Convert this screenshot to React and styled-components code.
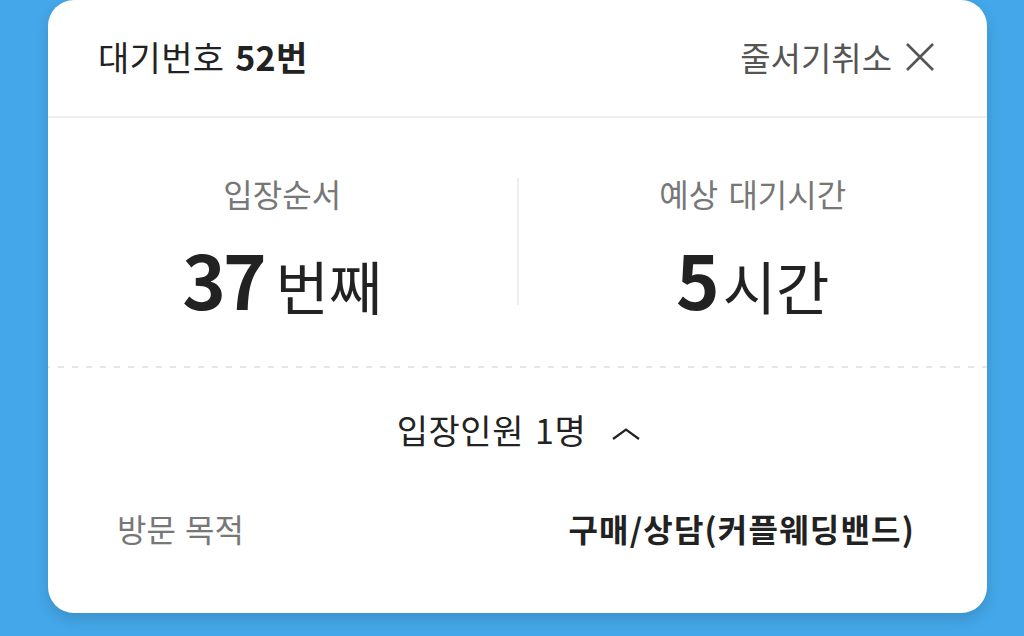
import React from "react";
import styled, { createGlobalStyle } from "styled-components";

const Global = createGlobalStyle`
  html, body { margin: 0; padding: 0; }
  body {
    background: #44a7e9;
    font-family: "Noto Sans CJK KR", "Noto Sans", sans-serif;
    -webkit-font-smoothing: antialiased;
  }
`;

const Page = styled.div`
  width: 1024px;
  height: 636px;
  background: #44a7e9;
  padding: 0 37px 0 48px;
  box-sizing: border-box;
  overflow: hidden;
`;

const Card = styled.div`
  background: #fff;
  border-radius: 26px;
  height: 613px;
  box-shadow: 0 6px 14px rgba(0, 0, 0, 0.14);
  display: flex;
  flex-direction: column;
  overflow: hidden;
`;

const Header = styled.div`
  height: 118px;
  box-sizing: border-box;
  border-bottom: 2px solid #efefef;
  display: flex;
  align-items: center;
  justify-content: space-between;
  padding: 0 52px 0 50px;
`;

const Title = styled.div`
  font-size: 34px;
  line-height: 40px;
  letter-spacing: 0.3px;
  word-spacing: 3px;
  color: #222;
  margin-top: -2px;
`;

const Strong = styled.span`
  font-weight: 700;
`;

const CancelButton = styled.button`
  border: 0;
  background: none;
  padding: 0;
  display: flex;
  align-items: center;
  gap: 13px;
  font-family: inherit;
  font-size: 33px;
  line-height: 40px;
  letter-spacing: 0;
  color: #555;
  margin-top: -2px;
  cursor: pointer;
`;

const Stats = styled.div`
  display: grid;
  grid-template-columns: 1fr 2px 1fr;
  height: 247px;
  box-sizing: border-box;
`;

const Stat = styled.div`
  display: flex;
  flex-direction: column;
  align-items: center;
  padding-top: 56px;
`;

const StatLabel = styled.div`
  font-size: 32px;
  line-height: 38px;
  letter-spacing: 0;
  word-spacing: 3px;
  color: #777;
`;

const StatValue = styled.div`
  margin-top: 26px;
  height: 80px;
  line-height: 80px;
  color: #222;
  white-space: nowrap;
`;

const Num = styled.span`
  font-size: 74px;
  font-weight: 700;
  letter-spacing: -3px;
  margin-right: ${(p) => p.$gap || 10}px;
`;

const Unit = styled.span`
  font-size: 58px;
  letter-spacing: 0;
`;

const VDivider = styled.div`
  margin-top: 60px;
  height: 127px;
  background: #eeeeee;
`;

const Dotted = styled.div`
  margin-top: 1px;
  height: 2px;
  background-image: linear-gradient(to right, #e6e6e6 0 6px, transparent 6px 14px);
  background-size: 14px 2px;
  background-position: 10px 0;
`;

const CountRow = styled.div`
  display: flex;
  justify-content: center;
  align-items: center;
  gap: 26px;
  padding-top: 43px;
  margin-left: 2px;
`;

const CountText = styled.div`
  font-size: 34px;
  line-height: 38px;
  letter-spacing: 0.5px;
  word-spacing: 3px;
  color: #222;
`;

const ChevronBox = styled.span`
  display: flex;
  margin-top: 8px;
`;

const InfoRow = styled.div`
  display: flex;
  justify-content: space-between;
  align-items: center;
  padding: 0 72px 0 69px;
  margin-top: 60px;
`;

const InfoLabel = styled.div`
  font-size: 32px;
  line-height: 38px;
  letter-spacing: 0;
  word-spacing: 2px;
  color: #777;
`;

const InfoValue = styled.div`
  font-size: 32px;
  line-height: 38px;
  letter-spacing: 1.2px;
  font-weight: 700;
  color: #222;
`;

const CloseIcon = () => (
  <svg width="30" height="28" viewBox="0 0 30 28">
    <path d="M2 1 L28 27 M28 1 L2 27" stroke="#555" strokeWidth="2.6" fill="none" />
  </svg>
);

const ChevronUp = () => (
  <svg width="28" height="12" viewBox="0 0 28 12">
    <path d="M1 11 L14 1.5 L27 11" stroke="#222" strokeWidth="2.2" fill="none" />
  </svg>
);

export default function App() {
  return (
    <>
      <Global />
      <Page>
        <Card>
          <Header>
            <Title>
              대기번호 <Strong>52번</Strong>
            </Title>
            <CancelButton>
              줄서기취소
              <CloseIcon />
            </CancelButton>
          </Header>
          <Stats>
            <Stat>
              <StatLabel>입장순서</StatLabel>
              <StatValue>
                <Num $gap={12}>37</Num>
                <Unit>번째</Unit>
              </StatValue>
            </Stat>
            <VDivider />
            <Stat>
              <StatLabel>예상 대기시간</StatLabel>
              <StatValue>
                <Num $gap={6}>5</Num>
                <Unit>시간</Unit>
              </StatValue>
            </Stat>
          </Stats>
          <Dotted />
          <CountRow>
            <CountText>입장인원 1명</CountText>
            <ChevronBox>
              <ChevronUp />
            </ChevronBox>
          </CountRow>
          <InfoRow>
            <InfoLabel>방문 목적</InfoLabel>
            <InfoValue>구매/상담(커플웨딩밴드)</InfoValue>
          </InfoRow>
        </Card>
      </Page>
    </>
  );
}
